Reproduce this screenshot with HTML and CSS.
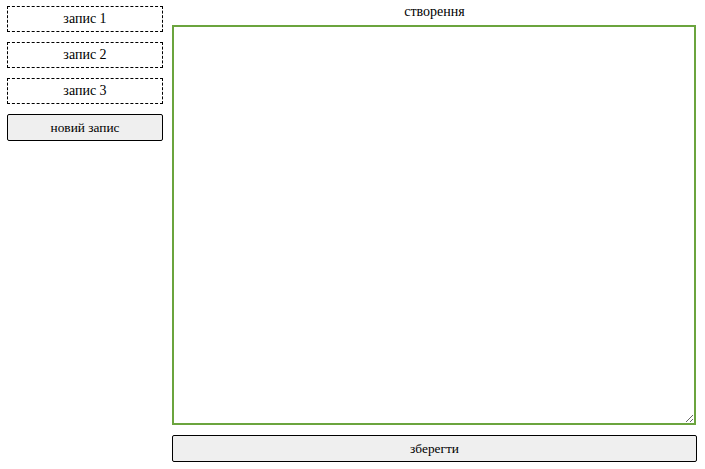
FILE: index.html
```html
<!DOCTYPE html>
<html lang="uk">
<head>
<meta charset="utf-8">
<link rel="stylesheet" href="styles.css">
</head>
<body>
<div class="app">
  <div class="sidebar">
    <div class="item">запис 1</div>
    <div class="item">запис 2</div>
    <div class="item">запис 3</div>
    <button class="btn new">новий запис</button>
  </div>
  <div class="main">
    <div class="title">створення</div>
    <textarea class="editor"></textarea>
    <button class="btn save">зберегти</button>
  </div>
</div>
</body>
</html>
```
FILE: styles.css
```css
html, body {
  margin: 0;
  padding: 0;
  background: #fff;
}
body {
  font-family: "Liberation Serif", "Times New Roman", serif;
  color: #000;
}
.app {
  display: flex;
  gap: 9px;
  padding: 6px 8px 0 7px;
}
.sidebar {
  width: 156px;
  flex: none;
  display: flex;
  flex-direction: column;
  gap: 10px;
}
.item {
  box-sizing: border-box;
  height: 26px;
  border: 1px dashed #000;
  display: flex;
  align-items: center;
  justify-content: center;
  font-size: 14px;
}
.btn {
  box-sizing: border-box;
  height: 27px;
  border: 1px solid #000;
  border-radius: 2px;
  background: #efefef;
  font-family: "Liberation Serif", "Times New Roman", serif;
  font-size: 13.33px;
  color: #000;
  padding: 0;
}
.main {
  width: 525px;
  flex: none;
  display: flex;
  flex-direction: column;
  margin-top: -6px;
}
.title {
  text-align: center;
  font-size: 14px;
  line-height: 16px;
  padding-top: 4px;
  height: 21px;
}
.editor {
  box-sizing: border-box;
  width: 524px;
  height: 400px;
  border: 2px solid #6ba43e;
  margin: 0;
  padding: 2px;
  resize: vertical;
  outline: none;
  font-family: "Liberation Mono", monospace;
}
.save {
  margin-top: 10px;
  width: 525px;
}
```
